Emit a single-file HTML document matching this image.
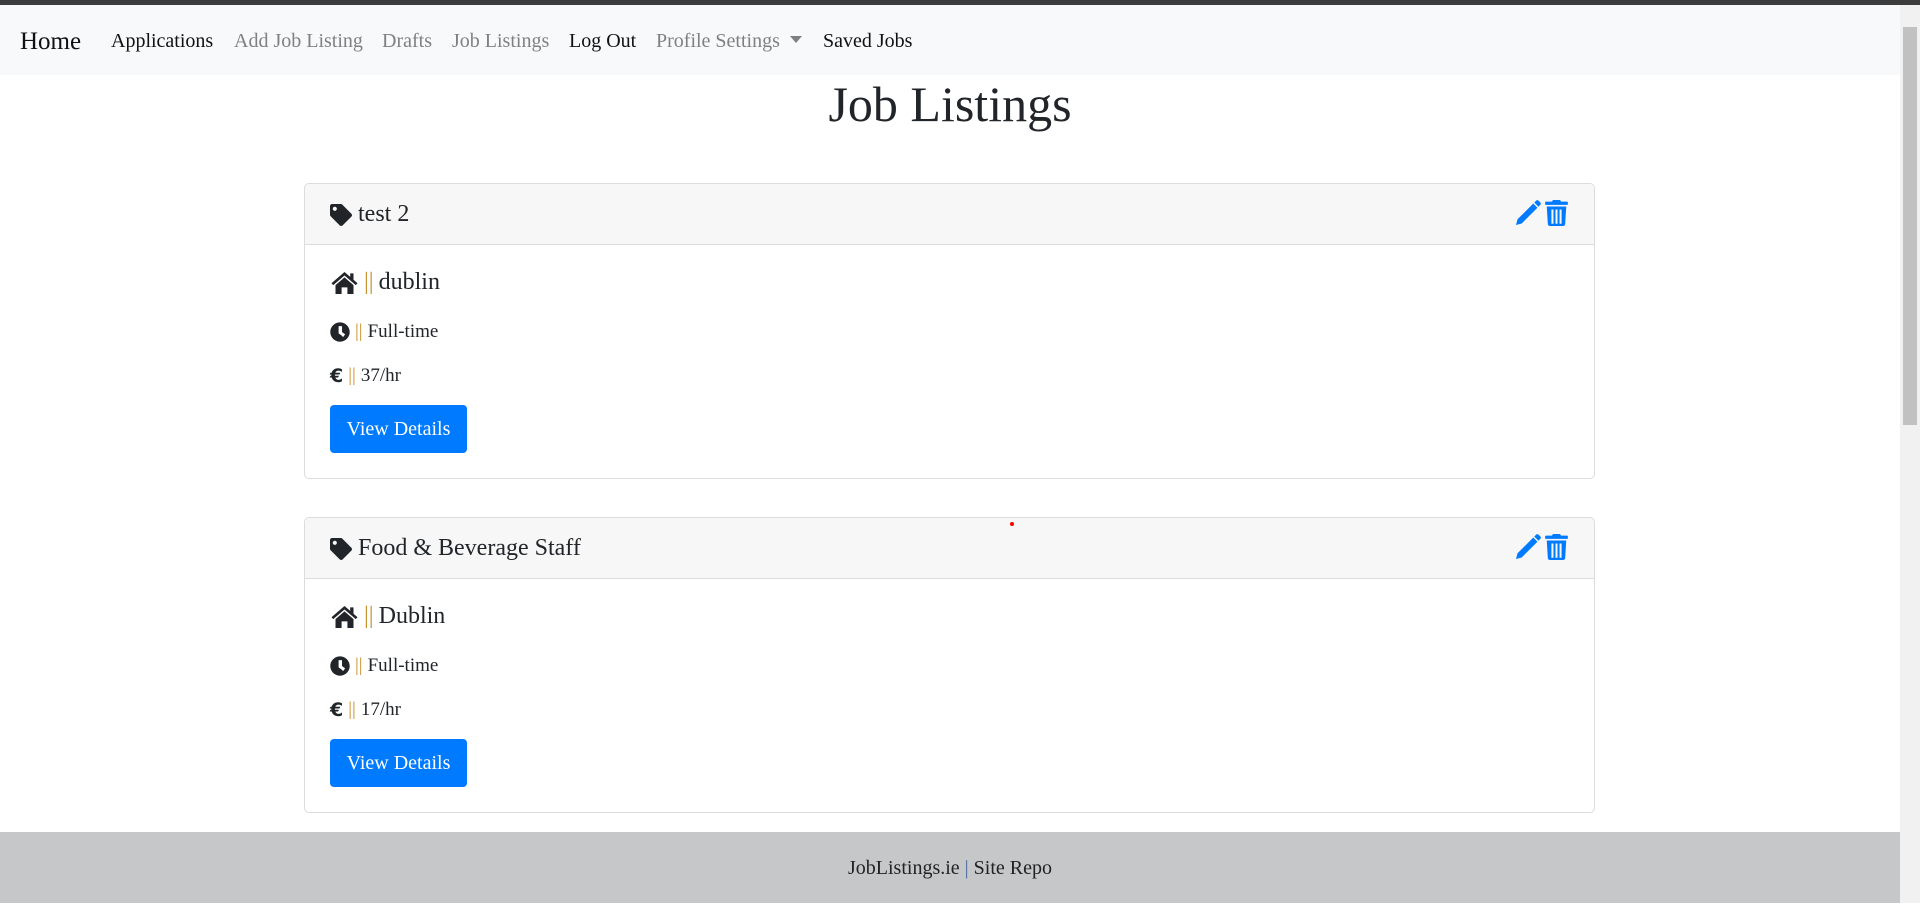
<!DOCTYPE html>
<html><head><meta charset="utf-8"><style>
*{box-sizing:border-box;margin:0;padding:0}
body{width:1920px;height:903px;overflow:hidden;background:#fff;font-family:"Liberation Serif",serif;color:#212529;position:relative}
.topbar{position:absolute;left:0;top:0;width:1920px;height:5px;background:#3c3c3c}
.nav{position:absolute;left:0;top:5px;width:1900px;height:70px;background:#f8f9fa}
.nav span{position:absolute;top:25px;font-size:20px;white-space:nowrap}
.g{color:#808080}.k{color:#111}
.caret{display:inline-block;width:0;height:0;border-left:6px solid transparent;border-right:6px solid transparent;border-top:7px solid #808080;margin-left:10px;vertical-align:4px}
.sb{position:absolute;left:1900px;top:5px;width:20px;height:898px;background:#f1f1f1}
.th{position:absolute;left:1903px;top:27px;width:14px;height:398px;background:#c1c1c1}
h1{position:absolute;left:0;width:1900px;text-align:center;top:75px;font-weight:normal;font-size:50px}
.card{position:absolute;left:304px;width:1291px;border:1px solid #dcdcdc;border-radius:5px;overflow:hidden}
.hd{height:61px;background:#f7f7f7;border-bottom:1px solid #dcdcdc;position:relative}
.hd .t{position:absolute;left:25px;top:17px;font-size:24px;display:flex;align-items:center;gap:6px}
.icons{position:absolute;right:26px;top:16px;display:flex;gap:4px}
.bd{position:relative;height:233px}
.row{position:absolute;left:25px;display:flex;align-items:center;gap:5px}
.bar{color:#c8912f}
.btn{position:absolute;left:25px;top:160px;width:137px;height:48px;background:#007bff;color:#fff;border-radius:4px;font-size:20px;text-align:center;line-height:48px}
.ft{position:absolute;left:0;top:832px;width:1900px;height:71px;background:#c6c7c9;text-align:center;font-size:20px;line-height:72px;color:#222}
</style></head><body>
<div class="topbar"></div>
<div class="nav">
<span class="k" style="left:20px;top:23px;font-size:25px">Home</span>
<span class="k" style="left:111px">Applications</span>
<span class="g" style="left:234px">Add Job Listing</span>
<span class="g" style="left:382px">Drafts</span>
<span class="g" style="left:452px">Job Listings</span>
<span class="k" style="left:569px">Log Out</span>
<span class="g" style="left:656px">Profile Settings<i class="caret"></i></span>
<span class="k" style="left:823px">Saved Jobs</span>
</div>
<div class="sb"></div><div class="th"></div>
<h1>Job Listings</h1>

<div class="card" style="top:183px">
<div class="hd"><div class="t"><svg width="22" height="22" viewBox="0 0 512 512"><path fill="#212529" d="M0 252V48C0 21 21 0 48 0h204c13 0 25 5 34 14l212 212c19 19 19 49 0 68L294 498c-19 19-49 19-68 0L14 286C5 277 0 265 0 252zM112 64a48 48 0 100 96 48 48 0 000-96z"/></svg>test 2</div>
<div class="icons"><svg width="26" height="26" viewBox="0 0 512 512"><path fill="#007bff" d="M20 492L50 380 360 70 442 152 132 462ZM380 50L420 10Q440-5 460 10L502 52Q517 72 502 92L462 132Z"/></svg><svg width="23" height="26" viewBox="0 0 448 512"><path fill="#007bff" d="M432 32H312l-9-19A24 24 0 00281 0H167a24 24 0 00-22 13l-9 19H16A16 16 0 000 48v32a16 16 0 0016 16h416a16 16 0 0016-16V48a16 16 0 00-16-16zM53 467a48 48 0 0048 45h246a48 48 0 0048-45l21-339H32zm71-279h40v280h-40zm80 0h40v280h-40zm80 0h40v280h-40z"/></svg></div></div>
<div class="bd">
<div class="row" style="top:24px;font-size:24px"><svg width="29" height="24" viewBox="0 0 576 512"><path fill="#212529" d="M288 20L10 260 48 300 288 96 528 300 566 260 480 186V50H410V126ZM96 300L288 136 480 300V490H350V350H226V490H96Z"/></svg><span class="bar">||</span> dublin</div>
<div class="row" style="top:76px;font-size:19px"><svg width="20" height="20" viewBox="0 0 512 512"><path fill="#212529" d="M256 8C119 8 8 119 8 256s111 248 248 248 248-111 248-248S393 8 256 8zm57 350l-88-64a12 12 0 01-5-10V116a12 12 0 0112-12h64a12 12 0 0112 12v142l69 50a12 12 0 013 17l-38 52a12 12 0 01-17 3z"/></svg><span class="bar">||</span> Full-time</div>
<div class="row" style="top:120px;font-size:19px"><b style="font-family:'DejaVu Sans';font-size:19px">€</b><span class="bar">||</span> 37/hr</div>
<div class="btn">View Details</div>
</div></div>

<div class="card" style="top:517px">
<div class="hd"><div class="t"><svg width="22" height="22" viewBox="0 0 512 512"><path fill="#212529" d="M0 252V48C0 21 21 0 48 0h204c13 0 25 5 34 14l212 212c19 19 19 49 0 68L294 498c-19 19-49 19-68 0L14 286C5 277 0 265 0 252zM112 64a48 48 0 100 96 48 48 0 000-96z"/></svg>Food &amp; Beverage Staff</div>
<div class="icons"><svg width="26" height="26" viewBox="0 0 512 512"><path fill="#007bff" d="M20 492L50 380 360 70 442 152 132 462ZM380 50L420 10Q440-5 460 10L502 52Q517 72 502 92L462 132Z"/></svg><svg width="23" height="26" viewBox="0 0 448 512"><path fill="#007bff" d="M432 32H312l-9-19A24 24 0 00281 0H167a24 24 0 00-22 13l-9 19H16A16 16 0 000 48v32a16 16 0 0016 16h416a16 16 0 0016-16V48a16 16 0 00-16-16zM53 467a48 48 0 0048 45h246a48 48 0 0048-45l21-339H32zm71-279h40v280h-40zm80 0h40v280h-40zm80 0h40v280h-40z"/></svg></div></div>
<div class="bd">
<div class="row" style="top:24px;font-size:24px"><svg width="29" height="24" viewBox="0 0 576 512"><path fill="#212529" d="M288 20L10 260 48 300 288 96 528 300 566 260 480 186V50H410V126ZM96 300L288 136 480 300V490H350V350H226V490H96Z"/></svg><span class="bar">||</span> Dublin</div>
<div class="row" style="top:76px;font-size:19px"><svg width="20" height="20" viewBox="0 0 512 512"><path fill="#212529" d="M256 8C119 8 8 119 8 256s111 248 248 248 248-111 248-248S393 8 256 8zm57 350l-88-64a12 12 0 01-5-10V116a12 12 0 0112-12h64a12 12 0 0112 12v142l69 50a12 12 0 013 17l-38 52a12 12 0 01-17 3z"/></svg><span class="bar">||</span> Full-time</div>
<div class="row" style="top:120px;font-size:19px"><b style="font-family:'DejaVu Sans';font-size:19px">€</b><span class="bar">||</span> 17/hr</div>
<div class="btn">View Details</div>
</div></div>
<div style="position:absolute;left:1010px;top:522px;width:4px;height:4px;border-radius:2px;background:#f00"></div>

<div class="ft">JobListings.ie <span style="color:#4a6a9a">|</span> Site Repo</div>
</body></html>
